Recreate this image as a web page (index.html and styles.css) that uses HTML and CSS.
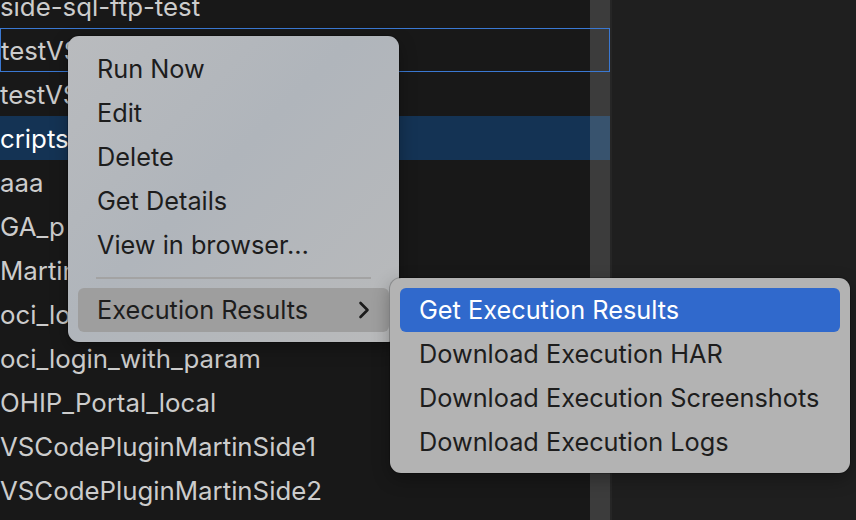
FILE: index.html
```html
<!DOCTYPE html>
<html>
<head>
<meta charset="utf-8">
<link rel="stylesheet" href="styles.css">
</head>
<body>
<div class="app">
  <div class="pane">
    <div class="list">
      <div class="row">side-sql-ftp-test</div>
      <div class="row focused">testVS</div>
      <div class="row">testVS</div>
      <div class="row selected">cripts</div>
      <div class="row">aaa</div>
      <div class="row">GA_p</div>
      <div class="row">Martin</div>
      <div class="row">oci_lo</div>
      <div class="row">oci_login_with_param</div>
      <div class="row">OHIP_Portal_local</div>
      <div class="row">VSCodePluginMartinSide1</div>
      <div class="row">VSCodePluginMartinSide2</div>
    </div>
    <div class="scrollbar"></div>
  </div>
  <div class="rest"></div>
</div>

<div class="menu main-menu">
  <div class="item">Run Now</div>
  <div class="item">Edit</div>
  <div class="item">Delete</div>
  <div class="item">Get Details</div>
  <div class="item">View in browser…</div>
  <div class="sep"></div>
  <div class="item open">
    <span>Execution Results</span>
    <svg class="chev" width="14" height="20" viewBox="0 0 14 20"><path d="M3.5 3 L10.5 10 L3.5 17" fill="none" stroke="#1b1b1b" stroke-width="2.6" stroke-linecap="round" stroke-linejoin="round"/></svg>
  </div>
</div>

<div class="menu sub-menu">
  <div class="item active">Get Execution Results</div>
  <div class="item">Download Execution HAR</div>
  <div class="item">Download Execution Screenshots</div>
  <div class="item">Download Execution Logs</div>
</div>
</body>
</html>
```
FILE: styles.css
```css
html, body {
  margin: 0;
  padding: 0;
  width: 856px;
  height: 520px;
  overflow: hidden;
  background: #1f1f1f;
  font-family: Inter, "Noto Sans", sans-serif;
}
.app {
  display: flex;
  height: 520px;
}
.pane {
  position: relative;
  width: 610px;
  height: 520px;
  background: #181818;
  overflow: hidden;
  border-right: 2px solid #262626;
}
.list {
  margin-top: -16px;
}
.row {
  position: relative;
  height: 44px;
  line-height: 45px;
  color: #cccccc;
  font-size: 25.8px;
  white-space: nowrap;
  overflow: hidden;
  box-sizing: border-box;
}
.row.selected {
  background: #143354;
  color: #ffffff;
}
.row.focused {
  border: 1px solid #3a78d2;
  line-height: 43px;
  z-index: 2;
}
.scrollbar {
  position: absolute;
  top: 0;
  right: 0;
  width: 20px;
  height: 520px;
  background: rgba(255, 255, 255, 0.155);
  z-index: 1;
}
.rest {
  flex: 1;
  background: #1f1f1f;
}
.menu {
  position: absolute;
  z-index: 10;
  box-sizing: border-box;
  border-radius: 11px;
  color: #1d1d1d;
  font-size: 25.3px;
  box-shadow: 0 0 0 1px rgba(0, 0, 0, 0.2), 0 6px 18px rgba(0, 0, 0, 0.3);
}
.main-menu {
  left: 68px;
  top: 36px;
  width: 331px;
  height: 306px;
  padding: 11px 10px 10px;
  background: linear-gradient(135deg, #b9bbbe 0%, #b0b5bb 45%, #b9babb 100%);
}
.sub-menu {
  left: 390px;
  top: 278px;
  width: 460px;
  height: 195px;
  padding: 10px 10px 9px;
  background: #b3b3b3;
  z-index: 11;
}
.item {
  height: 44px;
  line-height: 44px;
  padding: 0 19px;
  border-radius: 6px;
  white-space: nowrap;
  display: flex;
  align-items: center;
  justify-content: space-between;
}
.item.open {
  background: #9e9e9e;
  padding-right: 18px;
}
.item.active {
  background: #3069cc;
  color: #ffffff;
}
.sep {
  height: 21px;
  margin: 0 18px;
  display: flex;
  align-items: center;
}
.sep::before {
  content: "";
  display: block;
  width: 100%;
  height: 2px;
  background: #a3a3a3;
}
.chev {
  display: block;
}
```
